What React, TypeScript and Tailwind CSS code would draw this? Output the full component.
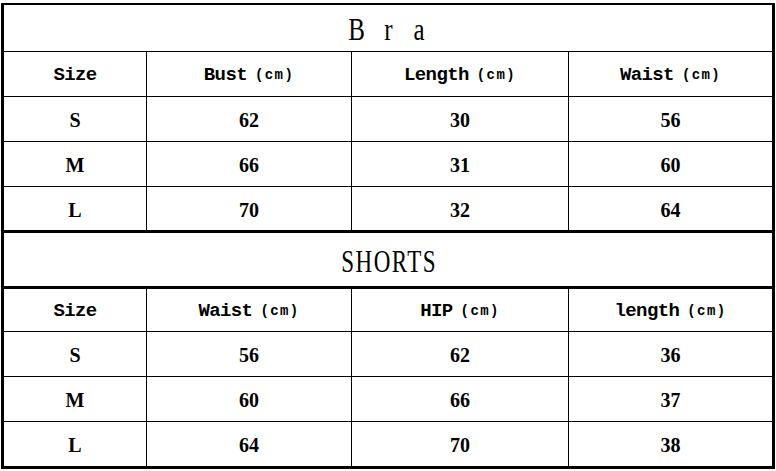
const bra = {
  title: 'B r a',
  heads: ['Size', 'Bust', 'Length', 'Waist'],
  rows: [
    ['S', '62', '30', '56'],
    ['M', '66', '31', '60'],
    ['L', '70', '32', '64'],
  ],
};

const shorts = {
  title: 'SHORTS',
  heads: ['Size', 'Waist', 'HIP', 'length'],
  rows: [
    ['S', '56', '62', '36'],
    ['M', '60', '66', '37'],
    ['L', '64', '70', '38'],
  ],
};

const serif = "font-['Liberation_Serif','Times_New_Roman',serif]";
const mono = "font-['Liberation_Mono','Courier_New',monospace]";

// half-width cells, like the SimSun title in the picture
const SpacedTitle = ({ text }: { text: string }) => (
  <div className={`flex items-center justify-center text-[32px] leading-none text-black ${serif}`}>
    {text.split('').map((c, i) => (
      <span key={i} className="inline-flex w-[15.75px] justify-center">
        <span className="inline-block scale-x-[0.78]">{c === ' ' ? '\u00a0' : c}</span>
      </span>
    ))}
  </div>
);

const Row = ({ cells, h, head }: { cells: string[]; h: string; head?: boolean }) => (
  <div className={`grid grid-cols-[143px_205px_217px_1fr] ${h}`}>
    {cells.map((c, i) => (
      <div
        key={i}
        className={`flex items-center justify-center text-black ${i < 3 ? 'border-r border-black' : ''} ${
          head
            ? `${mono} pt-[3px] text-[19px] font-bold tracking-[-0.6px]`
            : `${serif} pt-[2px] text-[20px] font-bold`
        }`}
      >
        {c}
        {head && i > 0 && (
          <span className="ml-[8px] text-[14px] tracking-[1.4px]">(cm)</span>
        )}
      </div>
    ))}
  </div>
);

export default function App() {
  return (
    <div className="h-[471px] w-[776px] bg-white pl-[1px] pt-[3px]">
      <div className="w-[774px] border-x-[3px] border-t-2 border-b-[3px] border-black">
        {/* Bra */}
        <div className="flex h-[47px] items-center justify-center border-b border-black pt-[2px]">
          <SpacedTitle text={bra.title} />
        </div>
        <Row cells={bra.heads} h="h-[45px] border-b border-black" head />
        <Row cells={bra.rows[0]} h="h-[45px] border-b border-black" />
        <Row cells={bra.rows[1]} h="h-[45px] border-b border-black" />
        <Row cells={bra.rows[2]} h="h-[43px]" />

        {/* Shorts */}
        <div className="flex h-[59px] items-center justify-center border-y-[3px] border-black pt-[3px]">
          <span
            className={`inline-block scale-x-[0.72] pl-[2px] text-[32px] leading-none tracking-[2px] text-black ${serif}`}
          >
            {shorts.title}
          </span>
        </div>
        <Row cells={shorts.heads} h="h-[43px] border-b border-black" head />
        <Row cells={shorts.rows[0]} h="h-[45px] border-b border-black" />
        <Row cells={shorts.rows[1]} h="h-[45px] border-b border-black" />
        <Row cells={shorts.rows[2]} h="h-[44px]" />
      </div>
    </div>
  );
}
